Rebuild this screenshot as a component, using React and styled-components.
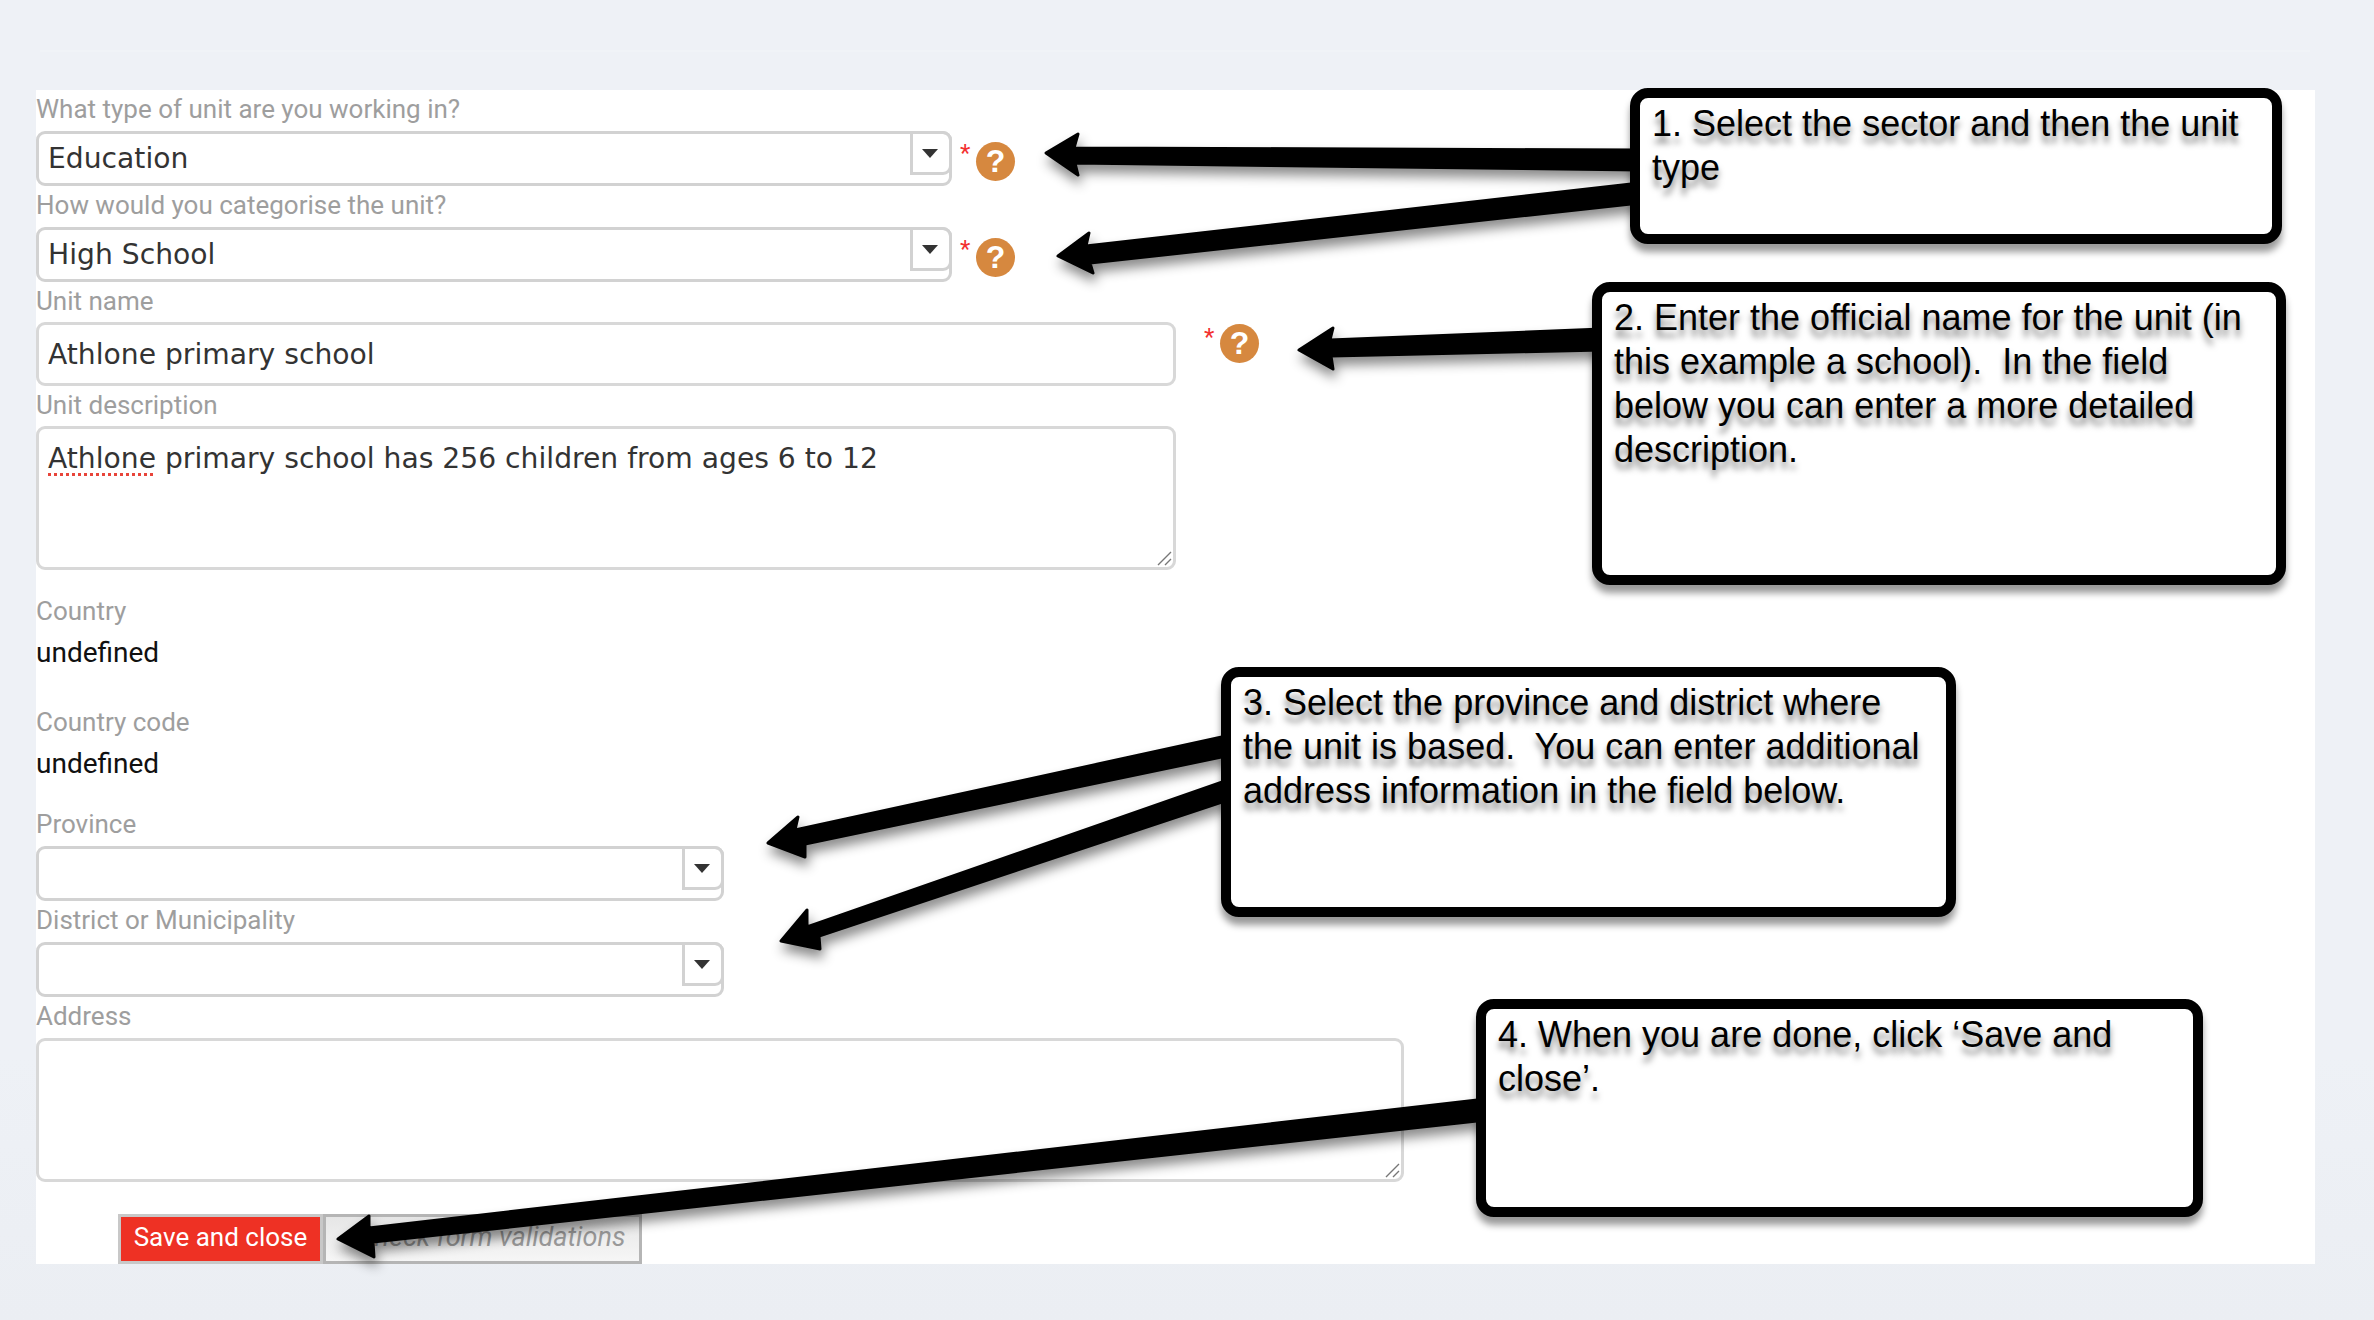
import React from 'react'
import styled, { createGlobalStyle } from 'styled-components'

const GlobalStyle = createGlobalStyle`
  html, body {
    margin: 0;
    padding: 0;
  }
  body {
    background: #eef1f6;
    font-family: Roboto, "Liberation Sans", sans-serif;
  }
`

const Page = styled.div`
  position: relative;
  width: 2374px;
  height: 1320px;
  padding: 90px 59px 0 36px;
  box-sizing: border-box;
  overflow: hidden;
  background: linear-gradient(180deg, #eef1f6 0%, #eef1f6 80%, #ebeef3 100%);
`

const TopRule = styled.div`
  position: absolute;
  top: 50px;
  left: 40px;
  right: 64px;
  height: 2px;
  background: #f0f3f7;
`

const Panel = styled.div`
  background: #fff;
  height: 1174px;
`

const Label = styled.div`
  height: ${(p) => p.$height || 41}px;
  line-height: 39px;
  font-size: 26px;
  color: #9e9e9e;
  margin-top: ${(p) => p.$top || 0}px;
`

const Value = styled.div`
  height: 36px;
  line-height: 38px;
  font-size: 28px;
  color: #111;
`

const Row = styled.div`
  display: flex;
  align-items: flex-start;
`

const SelectBox = styled.div`
  position: relative;
  box-sizing: border-box;
  width: ${(p) => p.$width}px;
  height: 55px;
  border: 3px solid #d2d2d2;
  border-radius: 9px;
  background: #fff;
  padding: 0 9px;
  line-height: 50px;
  font-family: "DejaVu Sans", sans-serif;
  font-size: 28.2px;
  color: #333;
`

const Caret = styled.div`
  position: absolute;
  top: -3px;
  right: -3px;
  width: 42px;
  height: 44px;
  box-sizing: border-box;
  border: 3px solid #d2d2d2;
  border-radius: 0 9px 9px 0;
  display: flex;
  align-items: center;
  justify-content: center;
  padding-right: 2px;

  &::after {
    content: '';
    width: 0;
    height: 0;
    border-left: 8px solid transparent;
    border-right: 8px solid transparent;
    border-top: 9px solid #333;
  }
`

const TextInput = styled.input`
  box-sizing: border-box;
  width: 1140px;
  height: 64px;
  border: 3px solid #d8d8d8;
  border-radius: 9px;
  padding: 0 9px;
  font-family: "DejaVu Sans", sans-serif;
  font-size: 28.2px;
  color: #333;
  outline: none;
`

const TextBox = styled.div`
  position: relative;
  box-sizing: border-box;
  width: ${(p) => p.$width}px;
  height: 144px;
  border: 3px solid #d8d8d8;
  border-radius: 9px;
  padding: 12px 9px;
  font-family: "DejaVu Sans", sans-serif;
  font-size: 28.2px;
  line-height: 36px;
  color: #333;
`

const Grip = styled.svg`
  position: absolute;
  right: 1px;
  bottom: 1px;
`

const Misspelt = styled.span`
  text-decoration: underline dotted #e8443a 3px;
  text-underline-offset: 5px;
`

const Required = styled.span`
  width: 9px;
  margin-left: ${(p) => p.$gap}px;
  margin-top: ${(p) => p.$top}px;
  font-size: 24px;
  line-height: 24px;
  color: #f33030;
`

const Help = styled.span`
  width: 39px;
  height: 39px;
  margin-left: 7px;
  margin-top: ${(p) => p.$top}px;
  border-radius: 50%;
  background: #d6883f;
  color: #fff;
  font-family: "Liberation Sans", sans-serif;
  font-weight: 700;
  font-size: 32px;
  line-height: 39px;
  text-align: center;
`

const Actions = styled.div`
  display: flex;
  margin: 32px 0 0 82px;
`

const SaveButton = styled.button`
  box-sizing: border-box;
  width: 205px;
  height: 50px;
  border: 3px solid #c8c8c8;
  background: #ee3124;
  color: #fff;
  font-family: Roboto, sans-serif;
  font-size: 26px;
  padding: 0 0 4px;
`

const CheckButton = styled.button`
  box-sizing: border-box;
  width: 319px;
  height: 50px;
  border: 3px solid #b5b5b5;
  background: linear-gradient(180deg, #e6e6e6, #f6f6f6);
  color: #999;
  font-family: Roboto, sans-serif;
  font-style: italic;
  font-size: 27px;
  padding: 0 0 4px 18px;
  white-space: nowrap;
`

const Arrows = styled.svg`
  position: absolute;
  top: 0;
  left: 0;
  filter: drop-shadow(2px 8px 6px rgba(0, 0, 0, 0.45));
  pointer-events: none;
`

const Callout = styled.div`
  position: absolute;
  left: ${(p) => p.$x}px;
  top: ${(p) => p.$y}px;
  width: ${(p) => p.$w}px;
  height: ${(p) => p.$h}px;
  box-sizing: border-box;
  border: 10px solid #000;
  border-radius: 18px;
  background: #fff;
  padding: 4px 12px;
  box-shadow: 0 8px 7px rgba(0, 0, 0, 0.4);
  font-family: "Liberation Sans", sans-serif;
  font-size: 36px;
  line-height: 44px;
  color: #000;
  white-space: pre-wrap;
  text-shadow: 0 7px 6px rgba(0, 0, 0, 0.5);
`

const arrowShapes = [
  '1046,153 1078,134 1074,148 1640,150 1640,170 1075,163 1078,175',
  '1058,256 1089,233 1086,246 1640,183 1640,203 1090,263 1093,273',
  '1299,350 1333,328 1330,340 1602,329 1602,350 1331,356 1333,369',
  '768,843 798,817 795,830 1231,735 1231,755 805,844 805,857',
  '781,941 807,910 807,927 1231,779 1231,799 819,936 820,949',
  '338,1239 369,1216 369,1228 1486,1099 1486,1120 373,1242 374,1257',
]

const calloutData = [
  { x: 1630, y: 88, w: 652, h: 156, text: '1. Select the sector and then the unit type' },
  { x: 1592, y: 282, w: 694, h: 303, text: '2. Enter the official name for the unit (in this example a school).  In the field below you can enter a more detailed description.' },
  { x: 1221, y: 667, w: 735, h: 250, text: '3. Select the province and district where the unit is based.  You can enter additional address information in the field below.' },
  { x: 1476, y: 999, w: 727, h: 218, text: '4. When you are done, click ‘Save and close’.' },
]

const ResizeGrip = () => (
  <Grip width="16" height="16" viewBox="0 0 16 16">
    <path d="M2 15 L15 2 M9 15 L15 9" stroke="#777" strokeWidth="1.4" fill="none" />
  </Grip>
)

const App = () => {
  return (
    <Page>
      <GlobalStyle />
      <TopRule />
      <Panel>
        <Label>What type of unit are you working in?</Label>
        <Row>
          <SelectBox $width={916}>Education<Caret /></SelectBox>
          <Required $gap={8} $top={10}>*</Required>
          <Help $top={11}>?</Help>
        </Row>
        <Label>How would you categorise the unit?</Label>
        <Row>
          <SelectBox $width={916}>High School<Caret /></SelectBox>
          <Required $gap={8} $top={10}>*</Required>
          <Help $top={11}>?</Help>
        </Row>
        <Label $height={40}>Unit name</Label>
        <Row>
          <TextInput readOnly value="Athlone primary school" />
          <Required $gap={28} $top={3}>*</Required>
          <Help $top={2}>?</Help>
        </Row>
        <Label $height={40}>Unit description</Label>
        <TextBox $width={1140}>
          <Misspelt>Athlone</Misspelt> primary school has 256 children from ages 6 to 12
          <ResizeGrip />
        </TextBox>
        <Label $top={22} $height={42}>Country</Label>
        <Value>undefined</Value>
        <Label $top={33} $height={42}>Country code</Label>
        <Value>undefined</Value>
        <Label $top={24}>Province</Label>
        <SelectBox $width={688}><Caret /></SelectBox>
        <Label>District or Municipality</Label>
        <SelectBox $width={688}><Caret /></SelectBox>
        <Label>Address</Label>
        <TextBox $width={1368}><ResizeGrip /></TextBox>
        <Actions>
          <SaveButton>Save and close</SaveButton>
          <CheckButton>Check form validations</CheckButton>
        </Actions>
      </Panel>
      <Arrows width="2374" height="1320" viewBox="0 0 2374 1320">
        {arrowShapes.map((points) => (
          <polygon key={points} points={points} fill="#000" stroke="#000" strokeWidth="3" strokeLinejoin="round" />
        ))}
      </Arrows>
      {calloutData.map((c) => (
        <Callout key={c.x} $x={c.x} $y={c.y} $w={c.w} $h={c.h}>{c.text}</Callout>
      ))}
    </Page>
  )
}

export default App
